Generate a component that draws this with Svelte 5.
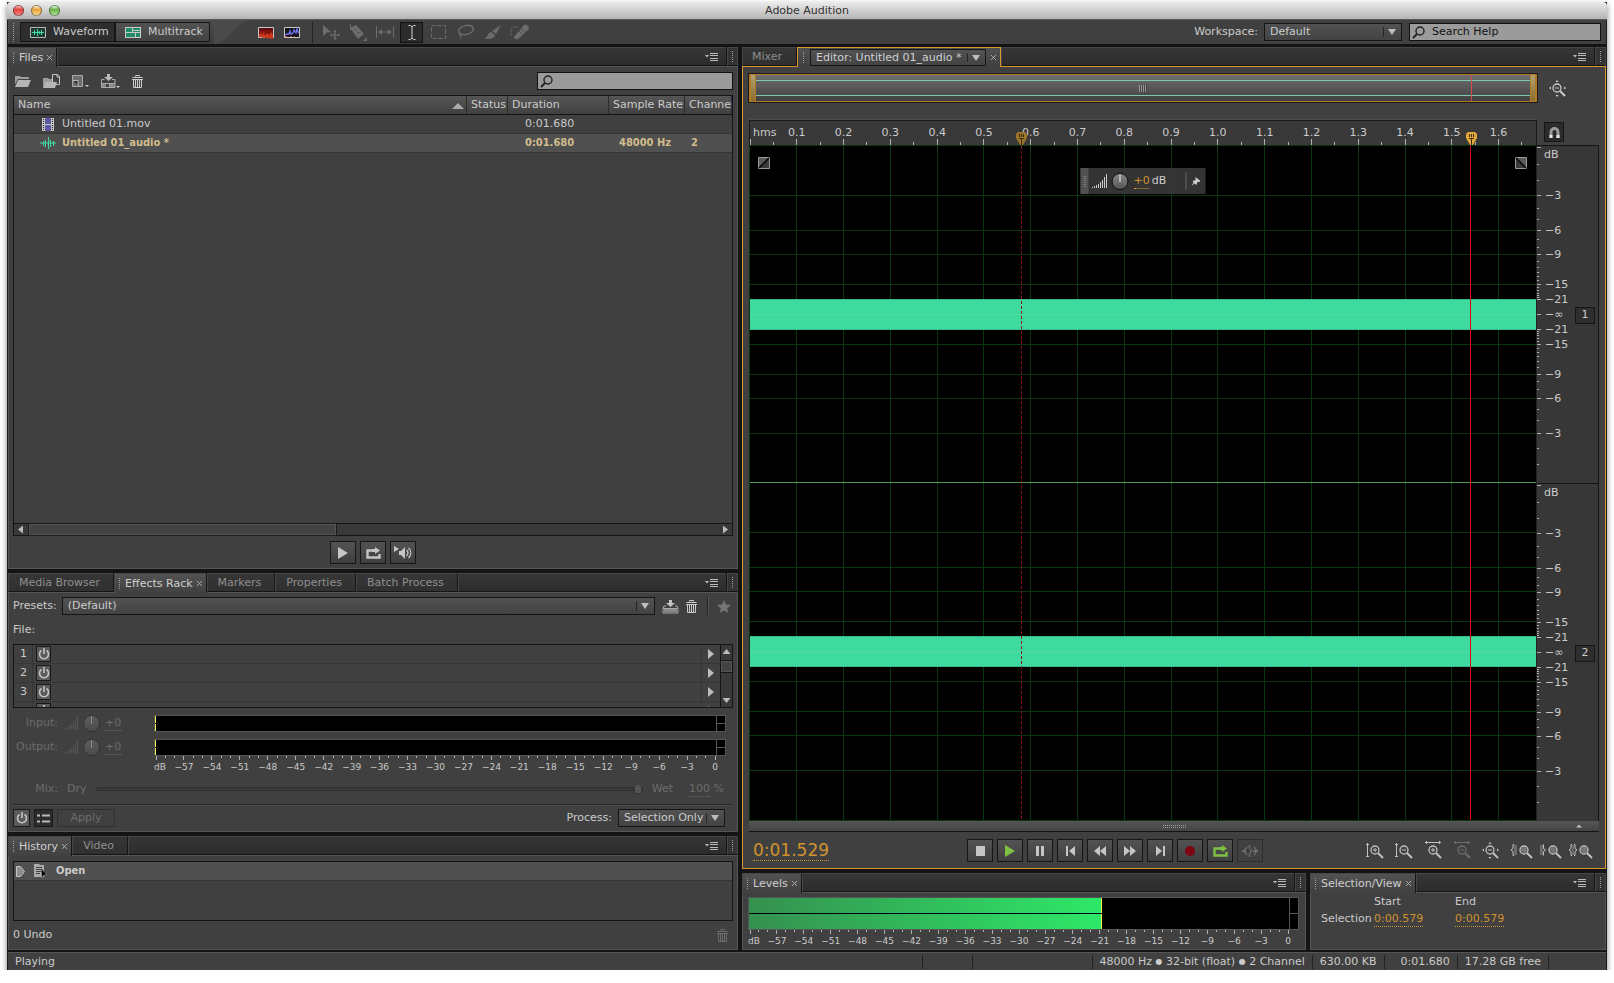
<script>
    // transport + view state
    let mode = $state('Waveform');
    let presetName = $state('(Default)');
    let mix = $state(100);
    let helpQuery = $state('Search Help');
    let fileQuery = $state('');

    const duration = 1.68;
    const playhead = 1.54;
    const marker = 0.58;
    const peak = -20.7;

    const files = [
        { name: 'Untitled 01.mov', icon: 'film', duration: '0:01.680', rate: '', channels: '' },
        { name: 'Untitled 01_audio *', icon: 'wave', duration: '0:01.680', rate: '48000 Hz', channels: '2', active: true }
    ];

    const tools = ['move', 'razor', 'timesel', 'ibeam', 'marquee', 'lasso', 'brush', 'heal'];
    const transport = ['stop', 'play', 'pause', 'toStart', 'rewind', 'forward', 'toEnd', 'record', 'loop', 'skip'];
    const zooms = ['zoomInV', 'zoomOutV', 'zoomInH', 'zoomOutH', 'zoomFull', 'zoomIn', 'zoomOut', 'zoomSel'];

    const seconds = Array.from({ length: 16 }, (_, i) => (i + 1) / 10);
    const halfSeconds = Array.from({ length: 17 }, (_, i) => i / 10 + 0.05);
    const gridDb = [-3, -6, -9, -15];
    const labelDb = [-3, -6, -9, -15, -21];
    const minorDb = Array.from({ length: 21 }, (_, i) => -(i + 1));
    const meterDb = Array.from({ length: 61 }, (_, i) => i - 60);

    const xAt = (t) => (t / duration) * 100 + '%';
    const yAt = (db, side) => 50 - side * 50 * Math.pow(10, db / 20) + '%';
    const meterAt = (db) => ((db + 60) / 60) * 100 + '%';

    const lens = (cx, inner) => `<circle cx="${cx}" cy="8" r="4" fill="#404040" stroke="currentColor" stroke-width="1.3"/>
        <path d="M${cx + 3} 11l5 5" stroke="currentColor" stroke-width="2"/>${inner}`;
    const plus = (cx) => `<path d="M${cx - 2} 8h4M${cx} 6v4" stroke="currentColor"/>`;
    const minus = (cx) => `<path d="M${cx - 2} 8h4" stroke="currentColor"/>`;
    const vArrow = `<path d="M1.500 1v14M0 2.500h3M0 14.500h3" stroke="currentColor" fill="none"/>`;
    const hArrow = `<path d="M1 .5h16M2.500 -1v3M15.500 -1v3" stroke="currentColor" fill="none"/>`;

    // name: [width, height, markup]
    const icons = {
        modeWave: [16, 11, '<path d="M.5 .5h15v10h-15z" fill="#1b3a30" stroke="#b5b5b5"/><path d="M2 5.500h12M4.500 3v5M7.500 2v7M9.500 4v3M11.500 3v5" stroke="#42dba0"/>'],
        modeMulti: [16, 11, '<path d="M0 0h16v11H0z" fill="#c9c9c9"/><path d="M1 1h6v4H1zM8 1h7v2H8zM8 4h7v1H8zM1 6h9v4H1zM11 6h4v4h-4z" fill="#238a66"/>'],
        spectral: [16, 11, '<path d="M.5 .5h15v10h-15z" fill="#7d1110" stroke="#c9c9c9"/><path d="M1 10V8l2-3 1 3 2-4 1 5 2-3 2 2 2-3 2 3v4z" fill="#c9371a"/><path d="M1 1h14v2H1z" fill="#5a0d12"/>'],
        pitch: [16, 11, '<path d="M.5 .5h15v10h-15z" fill="#15151f" stroke="#c9c9c9"/><path d="M1 8l2-1 2 0 1-3 1 3 2-1 1-3 2 3 1-4 1 3 1 1" stroke="#7279f5" fill="none" stroke-width="1.300"/><path d="M1 9.500h2M6 9.500h2M10 9.500h1" stroke="#d0402a"/>'],
        move: [18, 16, '<path d="M1 1l8 7-4 .6L1 12z" fill="currentColor"/><path d="M13 6l2 2h-1.300v2.500H16V9l2 2-2 2v-1.500h-2.300V14H15l-2 2-2-2h1.300v-2.500H10V13l-2-2 2-2v1.500h2.300V8H11z" fill="currentColor"/>'],
        razor: [18, 17, '<path d="M1 4l6-3 8 9-6 5z" fill="currentColor"/><path d="M6 5l1 1M9 8l1 1" stroke="#2c2c2c"/><path d="M1.500 0v6" stroke="currentColor"/><path d="M18 13v4h-4z" fill="currentColor"/>'],
        timesel: [18, 12, '<path d="M.5 0v12M17.500 0v12M3 6h12" stroke="currentColor"/><path d="M2 6l4-3v6zM16 6l-4-3v6z" fill="currentColor"/>'],
        ibeam: [8, 15, '<path d="M.5 .5h2L4 2l1.500-1.500h2M4 2v11M.5 14.500h2L4 13l1.500 1.500h2" stroke="currentColor" fill="none"/>'],
        marquee: [15, 14, '<path d="M.5 .5h14v13H.5z" stroke="currentColor" fill="none" stroke-dasharray="4 2"/>'],
        lasso: [17, 16, '<ellipse cx="9" cy="6" rx="7.500" ry="4.500" stroke="currentColor" fill="none" stroke-width="1.400" transform="rotate(-12 9 6)"/><path d="M3 9c-2 2 1 3 2 2s-2-2-2 0 1 3 1 4" stroke="currentColor" fill="none"/>'],
        brush: [18, 15, '<path d="M17 0l-5 9-4-3z" fill="currentColor"/><path d="M7 7l4 3c-1 4-5 4-11 4 4-1 3-6 7-7z" fill="currentColor"/>'],
        heal: [19, 17, '<path d="M4 13l9-11a3 3 0 0 1 5 4L8 15a3 3 0 0 1-4-2z" fill="currentColor"/><path d="M9 7l4 4M11 5l4 3" stroke="#404040" stroke-dasharray="1 1"/><path d="M8 3C2 1-1 6 2 12" fill="none" stroke="currentColor" stroke-dasharray="2 1"/>'],
        search: [13, 13, '<circle cx="8" cy="5" r="4" fill="none" stroke="#222" stroke-width="1.400"/><path d="M5 8l-4 4" stroke="#222" stroke-width="2"/>'],
        open: [16, 12, '<path d="M0 1h5l1 1h8v2H3L0 10z" fill="#9c9c9c"/><path d="M0 11l3-6.500h12.500" fill="none" stroke="#404040"/><path d="M3 5h13l-3 7H0z" fill="#b5b5b5"/>'],
        openFile: [17, 15, '<path d="M0 4h5l1 1h3v3H3L0 13z" fill="#9c9c9c"/><path d="M9.500 .5h5l2 2v8h-7z" fill="#404040" stroke="#c4c4c4"/><path d="M14 0v3h3" fill="none" stroke="#c4c4c4"/><path d="M2 8h12l-2 6H0z" fill="#b5b5b5"/>'],
        newFile: [17, 14, '<path d="M.5 1.500h10v11H.5z" fill="#6d6d6d" stroke="#aaa"/><path d="M1 6h5v6z" fill="#2b2b2b"/><path d="M.5 6.500h5.500V12" fill="none" stroke="#bbb"/><path d="M13 11h4l-2 2z" fill="#ccc"/>'],
        insert: [19, 15, '<path d="M6 0h3v3h3L7.500 7 3 3h3z" fill="#bbb"/><path d="M.5 5.500h3M11 5.500h3v8H.5v-8M0 9.500h14M8.500 9v4" stroke="#aaa" fill="none"/><path d="M9 10h5v3H9zM1 10h4v3H1z" fill="#888"/><path d="M15 12h4l-2 2z" fill="#ccc"/>'],
        trash: [11, 13, '<path d="M3.500 1.500v-1h4v1M.5 2.500h10M1.500 4v8.500h8V4M3.500 5v7M5.500 5v7M7.500 5v7M0 4.500h11" stroke="currentColor" fill="none"/>'],
        film: [12, 13, '<path d="M0 0h12v13H0z" fill="#c9c9c9"/><path d="M3 0h6v6H3zM3 7h6v6H3z" fill="#5a5aa0"/><path d="M1.500 1v12M10.500 1v12" stroke="#222" stroke-dasharray="1 1"/>'],
        wave: [16, 12, '<path d="M0 6h16" stroke="#42dba0"/><path d="M3.500 4v5M5.500 3v7M8.500 0v12M10.500 3v7M13.500 4v5" stroke="#42dba0"/>'],
        play: [10, 12, '<path d="M0 0l10 6-10 6z" fill="currentColor"/>'],
        loop: [15, 12, '<path d="M6 3.500H1.500v7h12V7" stroke="currentColor" stroke-width="2.400" fill="none"/><path d="M6 2h3V0l5 3.500L9 7V5H6z" fill="currentColor"/>'],
        speaker: [18, 14, '<path d="M0 0l5 3-5 3z" fill="currentColor"/><path d="M5 5h2l4-4v12l-4-4H5z" fill="currentColor"/><path d="M12.500 4c2 2 2 4 0 6M14.500 2c3 3 3 7 0 10" stroke="currentColor" fill="none" stroke-width="1.300"/>'],
        stop: [9, 10, '<path d="M0 0h9v10H0z" fill="currentColor"/>'],
        pause: [9, 10, '<path d="M0 0h3v10H0zM5 0h3v10H5z" fill="currentColor"/>'],
        toStart: [9, 10, '<path d="M0 0h2v10H0zM9 0v10L3 5z" fill="currentColor"/>'],
        toEnd: [9, 10, '<path d="M7 0h2v10H7zM0 0v10l6-5z" fill="currentColor"/>'],
        rewind: [12, 10, '<path d="M6 0v10L0 5zM12 0v10L6 5z" fill="currentColor"/>'],
        forward: [12, 10, '<path d="M0 0v10l6-5zM6 0v10l6-5z" fill="currentColor"/>'],
        record: [10, 10, '<circle cx="5" cy="5" r="5" fill="#7d0410"/>'],
        skip: [16, 12, '<path d="M0 6h4M11 6h5" stroke="currentColor" stroke-width="2"/><path d="M5 2L2 6l3 4M7.500 0v4M7.500 8v4M12 2l3 4-3 4M9 4v4" stroke="currentColor" fill="none" stroke-width="1.400"/>'],
        save: [15, 13, '<path d="M6 0h3v3h3L7.500 7 3 3h3z" fill="#c4c4c4"/><path d="M3 6H1L0 9v4h15V9l-1-3h-2M.5 8.500h14" stroke="#aaa" fill="none"/><path d="M1 9h13v3H1z" fill="#8a8a8a"/>'],
        star: [14, 13, '<path d="M7 0l2 4.500 5 .5-4 3.500L11.500 13 7 10.500 2.500 13 4 8.500 0 5l5-.5z" fill="#747474"/>'],
        power: [12, 12, '<path d="M3.500 2.500a4.500 4.500 0 1 0 5 0M6 0v6" stroke="#c4c4c4" fill="none" stroke-width="1.600"/>'],
        list: [13, 9, '<path d="M0 1.500h3M0 7.500h3M5 1.500h8M5 7.500h8" stroke="#bbb" stroke-width="2"/>'],
        state: [9, 11, '<path d="M.5 .5h4l4 5-4 5h-4z" fill="#8c8c8c" stroke="#c4c4c4"/>'],
        doc: [13, 14, '<path d="M0 0h5l1 1h4v12H0z" fill="#aaa"/><path d="M2 3.500h6M2 5.500h6M2 7.500h5M2 9.500h4" stroke="#444"/><path d="M7 4l6 7-3 0-2 3z" fill="#000" stroke="#aaa" stroke-width=".5"/>'],
        signal: [15, 14, '<path d="M.5 13v1M2.500 12v2M4.500 11v3M6.500 10v4M8.500 8v6M10.500 6v8M12.500 3v11M14.500 0v14" stroke="currentColor" shape-rendering="crispEdges"/>'],
        pin: [9, 9, '<path d="M4 0l5 4-1 1-2 0-1 3-2-1.500L0 9l2-3.500L1 4l3-1z" fill="currentColor"/>'],
        magnet: [11, 12, '<path d="M2 12V6a3.500 3.500 0 0 1 7 0v6" stroke="#999" stroke-width="3" fill="none"/><path d="M.5 9h3v3h-3zM7.500 9h3v3h-3z" fill="#e8e8e8"/>'],
        fadeIn: [12, 12, '<path d="M.5 .5h11v11H.5z" fill="#3a3a3a" stroke="#999"/><path d="M1 1h10L1 11z" fill="#5a5a5a"/><path d="M1 11L11 1" stroke="#000" stroke-width="1.300"/>'],
        fadeOut: [12, 12, '<path d="M.5 .5h11v11H.5z" fill="#3a3a3a" stroke="#999"/><path d="M1 1h10v10z" fill="#5a5a5a"/><path d="M1 1l10 10" stroke="#000" stroke-width="1.300"/>'],
        head: [11, 13, '<path d="M0 2l2-2h7l2 2v4l-4 7H4L0 6z" fill="currentColor"/><path d="M3.500 2v3M5.500 2v3M7.500 2v3M3 6.500h5M5.500 6v7" stroke="#3d2c08"/>'],
        menu: [13, 8, '<path d="M0 2h4L2 4.500z" fill="#bbb"/><path d="M5 .5h8M5 2.500h8M5 5.500h8M5 7.500h8" stroke="#bbb"/>'],
        close: [5, 5, '<path d="M0 0l5 5M5 0L0 5" stroke="#b5b5b5" stroke-width=".9"/>'],
        zoomInV: [17, 17, vArrow + lens(9, plus(9))],
        zoomOutV: [17, 17, vArrow + lens(9, minus(9))],
        zoomInH: [17, 17, hArrow + lens(9, plus(9))],
        zoomOutH: [17, 17, hArrow + lens(9, minus(9))],
        zoomFull: [17, 17, lens(8, minus(8)) + '<path d="M0 8l2-1.500v3zM17 8l-2-1.500v3zM8 0L6.500 2h3zM8 17l-1.500-2h3z" fill="currentColor"/>'],
        zoomIn: [20, 17, '<path d="M3 2.500H2v4l-2 1.500 2 1.500v4h1" stroke="currentColor" fill="none"/><path d="M3 3h3v10H3z" fill="#6a6a6a"/>' + lens(13, '<circle cx="13" cy="8" r="3" fill="#777"/>')],
        zoomOut: [20, 17, '<path d="M3.500 2.500v4l2 1.500-2 1.500v4" stroke="currentColor" fill="none"/><path d="M0 3h3v10H0z" fill="#6a6a6a"/>' + lens(13, '<circle cx="13" cy="8" r="3" fill="#777"/>')],
        zoomSel: [22, 17, '<path d="M3 2.500H2v4L0 8l2 1.500v4h1M5 2.500h1v4L8 8 6 9.500v4H5" stroke="currentColor" fill="none"/><path d="M3 3h2v10H3z" fill="#6a6a6a"/>' + lens(15, '<circle cx="15" cy="8" r="3" fill="#777"/>')]
    };
</script>

{#snippet icon(name)}
    <svg class="icon" width={icons[name][0]} height={icons[name][1]} viewBox="0 0 {icons[name][0]} {icons[name][1]}" aria-hidden="true">
        {@html icons[name][2]}
    </svg>
{/snippet}

{#snippet tabEnd()}
    <div class="tab-fill">
        <button class="bare" aria-label="Panel menu">{@render icon('menu')}</button>
    </div>
    <div class="tab-grip"><span class="grip"></span></div>
{/snippet}

{#snippet tabs(names, active)}
    <div class="tabs">
        {#each names as name}
            <div class="tab" class:active={name === active}>
                {#if name === active}<span class="grip"></span>{/if}
                <button class="bare">{name}</button>
                {#if name === active}
                    <button class="bare" aria-label="Close {name}">{@render icon('close')}</button>
                {/if}
            </div>
        {/each}
        {@render tabEnd()}
    </div>
{/snippet}

{#snippet dropdown(id, value)}
    <span class="dropdown">
        <select {id}><option>{value}</option></select>
    </span>
{/snippet}

{#snippet meter(level)}
    <div class="meter">
        <div class="bars">
            {#each [1, 2] as ch}
                <div class="bar"><div class="fill" style:width={meterAt(level)}></div></div>
            {/each}
        </div>
        <div class="clip"><i></i><i></i></div>
    </div>
{/snippet}

{#snippet meterScale()}
    <svg class="meter-scale" height="19">
        {#each meterDb as db}
            <line x1={meterAt(db)} x2={meterAt(db)} y1="0" y2={db % 3 === 0 ? 4 : 2} />
            {#if db > -60 && db % 3 === 0}
                <text x={meterAt(db)} y="14">{db === 0 ? '0' : '−' + -db}</text>
            {/if}
        {/each}
        <text class="unit" x="-2" y="14">dB</text>
    </svg>
{/snippet}

<div class="window">
    <header class="titlebar">
        <div class="lights">
            <i class="red"></i><i class="amber"></i><i class="green"></i>
        </div>
        Adobe Audition
    </header>

    <div class="toolbar">
        <div class="modes">
            <span class="grip tall"></span>
            <div class="mode-buttons">
                <button class:on={mode === 'Waveform'} onclick={() => (mode = 'Waveform')}>{@render icon('modeWave')}Waveform</button>
                <button class:on={mode === 'Multitrack'} onclick={() => (mode = 'Multitrack')}>{@render icon('modeMulti')}Multitrack</button>
            </div>
        </div>
        <svg class="curve" width="36" height="24" viewBox="0 0 36 24" aria-hidden="true">
            <path d="M0 0h36C22 1 16 23 0 24z" fill="#4a4a4a" />
        </svg>
        <div class="displays">
            <button class="bare" aria-label="Spectral frequency">{@render icon('spectral')}</button>
            <button class="bare" aria-label="Spectral pitch">{@render icon('pitch')}</button>
        </div>
        <div class="tools">
            {#each tools as tool}
                <button class="tool" class:on={tool === 'ibeam'} aria-label={tool}>{@render icon(tool)}</button>
            {/each}
        </div>
        <label for="workspace">Workspace:</label>
        <div class="workspace-select">{@render dropdown('workspace', 'Default')}</div>
        <div class="search help">
            {@render icon('search')}
            <input type="text" aria-label="Search Help" bind:value={helpQuery} />
        </div>
    </div>

    <main>
        <div class="column">
            <section class="panel files">
                {@render tabs(['Files'], 'Files')}
                <div class="body">
                    <div class="files-bar">
                        {#each ['open', 'openFile', 'newFile', 'insert', 'trash'] as name}
                            <button class="bare" aria-label={name}>{@render icon(name)}</button>
                        {/each}
                        <div class="search">
                            {@render icon('search')}
                            <input type="text" aria-label="Filter files" bind:value={fileQuery} />
                        </div>
                    </div>
                    <div class="list">
                        <div class="table-wrap">
                            <table>
                                <colgroup>
                                    <col /><col class="c-status" /><col class="c-duration" /><col class="c-rate" /><col class="c-channels" />
                                </colgroup>
                                <thead>
                                    <tr><th class="sorted">Name</th><th>Status</th><th>Duration</th><th>Sample Rate</th><th>Channels</th></tr>
                                </thead>
                                <tbody>
                                    {#each files as file}
                                        <tr class:current={file.active}>
                                            <td><span class="file">{@render icon(file.icon)}{file.name}</span></td>
                                            <td></td>
                                            <td class="pad">{file.duration}</td>
                                            <td class="rate">{file.rate}</td>
                                            <td>{file.channels}</td>
                                        </tr>
                                    {/each}
                                </tbody>
                            </table>
                        </div>
                        <div class="hscroll">
                            <button class="bare" aria-label="Scroll left"><i class="tri left"></i></button>
                            <span class="thumb"></span>
                            <button class="bare end" aria-label="Scroll right"><i class="tri right"></i></button>
                        </div>
                    </div>
                    <div class="preview">
                        {#each ['play', 'loop', 'speaker'] as name}
                            <button class="btn" aria-label={name}>{@render icon(name)}</button>
                        {/each}
                    </div>
                </div>
            </section>

            <section class="panel">
                {@render tabs(['Media Browser', 'Effects Rack', 'Markers', 'Properties', 'Batch Process'], 'Effects Rack')}
                <div class="body">
                    <div class="presets">
                        <label for="preset">Presets:</label>
                        {@render dropdown('preset', presetName)}
                        <button class="bare" aria-label="Save preset">{@render icon('save')}</button>
                        <button class="bare" aria-label="Delete preset">{@render icon('trash')}</button>
                        <span class="sep"></span>
                        <button class="bare" aria-label="Favorite">{@render icon('star')}</button>
                    </div>
                    <div class="file-label">File:</div>
                    <div class="rack">
                        <div class="slots">
                            {#each [1, 2, 3, 4] as n}
                                <div class="slot">
                                    <span class="num">{n < 4 ? n : ''}</span>
                                    <button class="power" aria-label="Power {n}">{@render icon('power')}</button>
                                    <button class="bare more" aria-label="Insert effect {n}"><i class="tri right big"></i></button>
                                </div>
                            {/each}
                        </div>
                        <div class="vscroll">
                            <button class="bare" aria-label="Scroll up"><i class="tri up"></i></button>
                            <span class="thumb"></span>
                            <button class="bare end" aria-label="Scroll down"><i class="tri down"></i></button>
                        </div>
                    </div>
                    <div class="gains">
                        <div class="gain-labels">
                            {#each ['Input:', 'Output:'] as label}
                                <div class="gain">
                                    <span class="gain-name">{label}</span>
                                    {@render icon('signal')}
                                    <span class="knob"></span>
                                    <button class="hot" disabled>+0</button>
                                </div>
                            {/each}
                        </div>
                        <div class="gain-meters">
                            {@render meter(-60)}
                            {@render meter(-60)}
                            {@render meterScale()}
                        </div>
                    </div>
                    <div class="mix">
                        <label class="gain-name" for="mix">Mix:</label>
                        <span>Dry</span>
                        <input id="mix" type="range" min="0" max="100" bind:value={mix} disabled />
                        <span>Wet</span>
                        <span class="mix-value"><button class="hot" disabled>{mix}</button> %</span>
                    </div>
                    <div class="rack-foot">
                        <button class="power large" aria-label="Rack power">{@render icon('power')}</button>
                        <button class="power large dark" aria-label="Toggle list">{@render icon('list')}</button>
                        <button class="apply" disabled>Apply</button>
                        <label for="process">Process:</label>
                        {@render dropdown('process', 'Selection Only')}
                    </div>
                </div>
            </section>

            <section class="panel">
                {@render tabs(['History', 'Video'], 'History')}
                <div class="body history-body">
                    <div class="history">
                        <div class="entry">{@render icon('state')}{@render icon('doc')}<b>Open</b></div>
                    </div>
                    <div class="undo">
                        0 Undo
                        <button class="bare" aria-label="Clear history">{@render icon('trash')}</button>
                    </div>
                </div>
            </section>
        </div>

        <div class="column">
            <section class="panel editor">
                <div class="tabs">
                    <div class="tab"><button class="bare">Mixer</button></div>
                    <div class="tab active focused">
                        <span class="grip"></span>
                        <span class="dropdown">
                            <select aria-label="Editor file"><option>Editor: Untitled 01_audio *</option></select>
                        </span>
                        <button class="bare" aria-label="Close editor">{@render icon('close')}</button>
                    </div>
                    {@render tabEnd()}
                </div>
                <div class="body">
                    <div class="row">
                        <div class="overview">
                            <span class="handle"></span>
                            <span class="ridge"></span>
                            <span class="handle"></span>
                            <span class="overview-head" style:left={xAt(playhead)}></span>
                        </div>
                        <div class="side zoom-all">
                            <button class="bare" aria-label="Zoom out full">{@render icon('zoomFull')}</button>
                        </div>
                    </div>

                    <div class="row ruler-row">
                        <div class="ruler">
                            <svg>
                                <text x="3" y="15">hms</text>
                                <line x1="0" x2="0" y1="18" y2="25" />
                                {#each seconds as t}
                                    <text class="mid" x={xAt(t)} y="15">{t.toFixed(1)}</text>
                                    <line x1={xAt(t)} x2={xAt(t)} y1="18" y2="25" />
                                {/each}
                                {#each halfSeconds as t}
                                    <line x1={xAt(t)} x2={xAt(t)} y1="21" y2="25" />
                                {/each}
                            </svg>
                            <span class="head dim" style:left={xAt(marker)}>{@render icon('head')}</span>
                            <span class="head" style:left={xAt(playhead)}>{@render icon('head')}</span>
                        </div>
                        <div class="side">
                            <button class="magnet" aria-label="Toggle snapping">{@render icon('magnet')}</button>
                        </div>
                    </div>

                    <div class="row waves-row">
                        <div class="waves">
                            {#each [1, 2] as ch}
                                <svg class="channel">
                                    {#each seconds as t}
                                        <line class="grid" x1={xAt(t)} x2={xAt(t)} y1="0" y2="100%" />
                                    {/each}
                                    {#each [1, -1] as side}
                                        {#each gridDb as db}
                                            <line class="grid" x1="0" x2="100%" y1={yAt(db, side)} y2={yAt(db, side)} />
                                        {/each}
                                    {/each}
                                    <rect x="0" y={yAt(-20.8, 1)} width="100%" height={100 * Math.pow(10, -20.8 / 20) + '%'} fill="#3fdaa0" />
                                    <line class="zero" x1="0" x2="100%" y1="50%" y2="50%" />
                                </svg>
                            {/each}
                            <svg class="cursors">
                                <line class="start" x1={xAt(marker)} x2={xAt(marker)} y1="0" y2="100%" />
                                <line class="now" x1={xAt(playhead)} x2={xAt(playhead)} y1="0" y2="100%" />
                            </svg>
                            <span class="fade in">{@render icon('fadeIn')}</span>
                            <span class="fade out">{@render icon('fadeOut')}</span>
                            <div class="hud">
                                <span class="hud-grip"><span class="grip"></span></span>
                                {@render icon('signal')}
                                <span class="knob lit"></span>
                                <button class="hot">+0</button>
                                <span>dB</span>
                                <span class="sep"></span>
                                <button class="bare" aria-label="Pin">{@render icon('pin')}</button>
                            </div>
                        </div>
                        <div class="side scales">
                            {#each [1, 2] as ch}
                                <div class="scale">
                                    <svg>
                                        <text x="7" y="8">dB</text>
                                        <line x1="0" x2="4" y1="1" y2="1" />
                                        {#each [1, -1] as side}
                                            {#each minorDb as db}
                                                <line x1="0" x2={labelDb.includes(db) ? 4 : 2} y1={yAt(db, side)} y2={yAt(db, side)} />
                                            {/each}
                                            {#each labelDb as db}
                                                <text x="8" y={yAt(db, side)}>−{-db}</text>
                                            {/each}
                                        {/each}
                                        <line x1="0" x2="4" y1="50%" y2="50%" />
                                        <text x="8" y="50%">−∞</text>
                                    </svg>
                                    <button class="ch" aria-label="Channel {ch}">{ch}</button>
                                </div>
                            {/each}
                        </div>
                    </div>

                    <div class="resize"><span class="grip wide"></span><i class="tri up small"></i></div>

                    <div class="transport">
                        <button class="hot time">0:01.529</button>
                        <div class="keys">
                            {#each transport as key}
                                <button class="btn {key}" disabled={key === 'skip'} aria-label={key}>{@render icon(key)}</button>
                            {/each}
                        </div>
                        <div class="zooms">
                            {#each zooms as key}
                                <button class="bare" disabled={key === 'zoomOutH'} aria-label={key}>{@render icon(key)}</button>
                            {/each}
                        </div>
                    </div>
                </div>
            </section>

            <div class="bottom">
                <section class="panel">
                    {@render tabs(['Levels'], 'Levels')}
                    <div class="body levels">
                        {@render meter(peak)}
                        {@render meterScale()}
                    </div>
                </section>
                <section class="panel">
                    {@render tabs(['Selection/View'], 'Selection/View')}
                    <div class="body selection">
                        <span></span><span>Start</span><span>End</span>
                        <span>Selection</span>
                        <button class="hot">0:00.579</button>
                        <button class="hot">0:00.579</button>
                    </div>
                </section>
            </div>
        </div>
    </main>

    <footer>
        <span class="status">Playing</span>
        <span class="cell empty"></span>
        <span class="cell gap"></span>
        <span class="cell">48000 Hz <small>●</small> 32-bit (float) <small>●</small> 2 Channel</span>
        <span class="cell">630.00 KB</span>
        <span class="cell length">0:01.680</span>
        <span class="cell">17.28 GB free</span>
        <span class="cell tail"></span>
    </footer>
</div>

<style>
    :global(body) {
        margin: 0;
        background: #fff;
    }

    .window {
        position: relative;
        top: 2px;
        display: flex;
        flex-direction: column;
        box-sizing: border-box;
        min-height: calc(100vh - 13px);
        margin: 0 7px;
        border: 1px solid #1a1a1a;
        border-top: 0;
        background: #141414;
        box-shadow: 0 3px 6px rgba(0, 0, 0, 0.5);
        color: #cbcbcb;
        font: 11px/16px 'DejaVu Sans', 'Noto Sans', sans-serif;
    }

    button, input, select {
        box-sizing: border-box;
        margin: 0;
        font: inherit;
        color: inherit;
    }

    .bare {
        display: flex;
        align-items: center;
        padding: 0;
        border: 0;
        background: none;
        white-space: nowrap;
    }

    .icon {
        display: block;
        flex: none;
        overflow: visible;
    }

    .grip {
        flex: none;
        width: 3px;
        height: 11px;
        background: repeating-conic-gradient(#a0a0a0 0 25%, transparent 0 100%) 0 0 / 2px 2px;
    }

    .grip.tall { height: 19px; }
    .grip.wide { width: 25px; height: 3px; }

    .sep {
        width: 1px;
        height: 18px;
        background: #222;
        border-right: 1px solid #555;
    }

    .tri { display: block; background: #bdbdbd; }
    .tri.left { width: 5px; height: 8px; clip-path: polygon(100% 0, 100% 100%, 0 50%); }
    .tri.right { width: 5px; height: 8px; clip-path: polygon(0 0, 0 100%, 100% 50%); }
    .tri.big { width: 6px; height: 10px; }
    .tri.up { width: 8px; height: 5px; clip-path: polygon(0 100%, 100% 100%, 50% 0); }
    .tri.down { width: 8px; height: 5px; clip-path: polygon(0 0, 100% 0, 50% 100%); }
    .tri.small { width: 6px; height: 3px; }

    /* title bar and toolbar */
    .titlebar {
        display: flex;
        align-items: center;
        justify-content: center;
        position: relative;
        height: 17px;
        margin: 0 -1px;
        border-radius: 4px 4px 0 0;
        background: linear-gradient(#ececec, #b4b4b4);
        color: #333;
        border-bottom: 1px solid #5a5a5a;
    }

    .lights {
        position: absolute;
        left: 6px;
        display: flex;
        gap: 7px;
    }

    .lights i {
        box-sizing: border-box;
        width: 11px;
        height: 11px;
        border: 1px solid rgba(0, 0, 0, 0.4);
        border-radius: 50%;
    }

    .red { background: linear-gradient(#fbb, #e0443e 40%, #f98080); }
    .amber { background: linear-gradient(#fed, #e8a33a 40%, #fbd98a); }
    .green { background: linear-gradient(#dfd, #6cb04a 40%, #b4e69a); }

    .toolbar {
        display: flex;
        align-items: center;
        height: 24px;
        background: #404040;
        border-left: 1px solid #4e4e4e;
    }

    .modes {
        display: flex;
        align-items: center;
        gap: 5px;
        height: 100%;
        padding: 0 4px 0 3px;
        background: linear-gradient(#4c4c4c, #3c3c3c);
    }

    .mode-buttons { display: flex; }

    .mode-buttons button {
        display: flex;
        align-items: center;
        gap: 7px;
        width: 95px;
        height: 20px;
        padding: 0 0 0 9px;
        border: 1px solid #161616;
        background: linear-gradient(#525252, #424242);
    }

    .mode-buttons button.on { background: #2e2e2e; }

    .curve { align-self: flex-start; }

    .displays {
        display: flex;
        gap: 10px;
        margin: 0 6px 0 8px;
        padding-right: 12px;
        border-right: 1px solid #222;
        height: 21px;
    }

    .tools {
        display: flex;
        flex: 1;
        gap: 4px;
        color: #6c6c6c;
    }

    .tool {
        display: flex;
        align-items: center;
        justify-content: center;
        width: 23px;
        height: 21px;
        padding: 0;
        border: 1px solid transparent;
        background: none;
    }

    .tool.on {
        border-color: #111;
        background: #2c2c2c;
        color: #d0d0d0;
    }

    .workspace-select {
        display: flex;
        width: 138px;
        margin: 0 7px 0 6px;
    }

    .dropdown {
        position: relative;
        display: inline-flex;
        flex: 1;
        height: 18px;
        border: 1px solid #151515;
        box-sizing: border-box;
        background: linear-gradient(#525252, #434343);
    }

    .dropdown::before {
        content: '';
        position: absolute;
        right: 17px;
        top: 3px;
        bottom: 3px;
        width: 1px;
        background: #262626;
    }

    .dropdown::after {
        content: '';
        position: absolute;
        right: 5px;
        top: 5px;
        width: 8px;
        height: 6px;
        background: #bdbdbd;
        clip-path: polygon(0 0, 100% 0, 50% 100%);
    }

    .dropdown select {
        flex: 1;
        min-width: 0;
        appearance: none;
        padding: 0 18px 0 5px;
        border: 0;
        background: none;
        outline: none;
    }

    .search {
        display: flex;
        align-items: center;
        gap: 7px;
        box-sizing: border-box;
        height: 18px;
        padding: 0 3px 0 2px;
        border: 1px solid #111;
        background: #9b9b9b;
    }

    .search input {
        flex: 1;
        min-width: 0;
        padding: 0;
        border: 0;
        background: none;
        outline: none;
        color: #111;
    }

    .help { width: 192px; margin-right: 5px; }

    /* panels */
    main {
        display: grid;
        grid-template-columns: minmax(0, 730fr) minmax(0, 864fr);
        gap: 4px;
        flex: 1;
        margin-top: 3px;
    }

    .column {
        display: flex;
        flex-direction: column;
        gap: 4px;
        min-height: 0;
    }

    .panel { display: flex; flex-direction: column; }
    .files, .editor { flex: 1; }

    .body {
        flex: 1;
        display: flex;
        flex-direction: column;
        padding: 4px;
        border: 1px solid #555;
        background: #404040;
    }

    .files .body { padding-top: 5px; }

    .tabs {
        display: flex;
        height: 19px;
    }

    .tab {
        display: flex;
        align-items: center;
        box-sizing: border-box;
        padding: 0 13px 0 10px;
        border-right: 1px solid #151515;
        border-left: 1px solid #464646;
        border-top: 1px solid #464646;
        border-bottom: 1px solid #151515;
        background: linear-gradient(#363636, #303030);
        color: #8e8e8e;
    }

    .tab.active {
        position: relative;
        gap: 4px;
        height: 20px;
        padding: 0 4px 0 3px;
        border-bottom: 0;
        background: linear-gradient(#525252, #404040);
        color: #cfcfcf;
    }

    .tab-fill {
        display: flex;
        flex: 1;
        align-items: center;
        justify-content: flex-end;
        padding-right: 8px;
        border-top: 1px solid #464646;
        border-left: 1px solid #464646;
        border-bottom: 1px solid #151515;
        background: linear-gradient(#363636, #2c2c2c);
    }

    .tab-grip {
        display: flex;
        align-items: center;
        justify-content: center;
        width: 9px;
        border: 1px solid #464646;
        border-bottom-color: #151515;
        margin-left: 1px;
        background: #333;
    }

    .files-bar {
        display: flex;
        align-items: center;
        gap: 12px;
        height: 18px;
        padding-left: 2px;
    }

    .files-bar .search { width: 196px; margin-left: auto; }

    .list {
        display: flex;
        flex: 1;
        flex-direction: column;
        margin: 5px 0;
        border: 1px solid #141414;
    }

    .table-wrap { flex: 1; overflow: hidden; }

    table {
        width: 100%;
        table-layout: fixed;
        border-collapse: separate;
        border-spacing: 0;
    }

    .c-status { width: 41px; }
    .c-duration { width: 101px; }
    .c-rate { width: 76px; }
    .c-channels { width: 47px; }

    th {
        box-sizing: border-box;
        height: 19px;
        padding: 0 4px;
        background: linear-gradient(#565656, #404040);
        border-bottom: 1px solid #141414;
        box-shadow: inset -1px 0 #2c2c2c;
        font-weight: normal;
        text-align: left;
        white-space: nowrap;
    }

    .sorted { position: relative; }

    .sorted::after {
        content: '';
        position: absolute;
        right: 3px;
        top: 7px;
        width: 12px;
        height: 6px;
        background: #aaa;
        clip-path: polygon(50% 0, 100% 100%, 0 100%);
    }

    td {
        box-sizing: border-box;
        height: 19px;
        padding: 0 6px;
        border-bottom: 1px solid #353535;
        white-space: nowrap;
    }

    .pad { padding-left: 17px; }
    .rate { text-align: right; padding-right: 14px; }

    /* plain DejaVu bold runs too wide for the list columns */
    .current, b {
        font-family: 'DejaVu Sans Condensed', 'Noto Sans', sans-serif;
        font-weight: bold;
    }

    .current {
        background: #505050;
        color: #d2bd8d;
    }

    .file {
        display: grid;
        grid-template-columns: 16px auto;
        justify-content: start;
        justify-items: center;
        align-items: center;
        gap: 6px;
        padding-left: 20px;
    }

    .hscroll {
        display: flex;
        align-items: center;
        height: 11px;
        border-top: 1px solid #141414;
        background: #393939;
        padding: 0 4px;
    }

    .hscroll .thumb {
        width: 43%;
        height: 9px;
        margin-left: 6px;
        border: 1px solid #555;
        outline: 1px solid #1c1c1c;
        background: #434343;
    }

    .hscroll .end { margin-left: auto; }

    .preview {
        display: flex;
        justify-content: center;
        gap: 4px;
    }

    .btn {
        display: flex;
        align-items: center;
        justify-content: center;
        width: 26px;
        height: 23px;
        padding: 0;
        border: 1px solid #161616;
        background: linear-gradient(#535353, #3f3f3f);
        color: #c6c6c6;
    }

    /* effects rack */
    .presets {
        display: flex;
        align-items: center;
        height: 18px;
        gap: 8px;
        padding-right: 2px;
    }

    .presets label { margin-right: -3px; }
    .presets .sep { margin-left: 2px; }

    .file-label { height: 29px; line-height: 29px; }

    .rack {
        display: flex;
        height: 62px;
        border: 1px solid #141414;
    }

    .slots { flex: 1; overflow: hidden; }

    .slot {
        display: flex;
        align-items: center;
        height: 18px;
        border-bottom: 1px solid #363636;
    }

    .num {
        box-sizing: border-box;
        width: 19px;
        padding-right: 5px;
        border-right: 1px solid #363636;
        text-align: right;
        height: 18px;
        line-height: 18px;
    }

    .power {
        display: flex;
        align-items: center;
        justify-content: center;
        width: 15px;
        height: 16px;
        margin-left: 3px;
        padding: 0;
        border: 1px solid #191919;
        background: #5a5a5a;
    }

    .more {
        height: 18px;
        margin-left: auto;
        padding: 0 6px;
        border-left: 1px solid #363636;
    }

    .vscroll {
        display: flex;
        flex-direction: column;
        align-items: center;
        width: 11px;
        padding: 4px 0;
        border-left: 1px solid #141414;
        background: #393939;
    }

    .vscroll .thumb {
        width: 9px;
        height: 9px;
        margin-top: 7px;
        border: 1px solid #555;
        outline: 1px solid #141414;
        background: #434343;
    }

    .vscroll .end { margin-top: auto; }

    .gains { display: flex; color: #6c6c6c; }
    .gain-labels { width: 141px; padding-top: 3px; }

    .gain {
        display: flex;
        align-items: center;
        height: 24px;
        gap: 5px;
    }

    .gain .icon { color: #555; }
    .gain-name { width: 45px; text-align: right; color: #6c6c6c; }

    .knob {
        flex: none;
        width: 15px;
        height: 15px;
        border: 1px solid #333;
        border-radius: 50%;
        background:
            linear-gradient(#8a8a8a, #8a8a8a) 50% 0 / 1px 8px no-repeat,
            linear-gradient(#5c5c5c, #4c4c4c);
    }

    .knob.lit {
        border-color: #111;
        background:
            linear-gradient(#eee, #eee) 50% 0 / 1px 8px no-repeat,
            linear-gradient(#888, #555);
    }

    .hot {
        padding: 0;
        border: 0;
        border-bottom: 1px dotted currentColor;
        background: none;
        color: #d0922f;
        line-height: 14px;
    }

    .hot:disabled { color: #6c6c6c; }

    .gain-meters {
        flex: 1;
        padding: 7px 7px 0 0;
        color: #cbcbcb;
    }

    .gain-meters .meter { margin-bottom: 7px; }
    .gain-meters .meter + .meter { margin-bottom: 0; }

    .meter {
        display: flex;
        box-sizing: border-box;
        height: 17px;
        border: 1px solid #555;
        background: #000;
    }

    .levels .meter { height: 33px; }

    .bars {
        display: grid;
        flex: 1;
        gap: 1px;
    }

    .fill {
        height: 100%;
        border-right: 1px solid #f5f04a;
        background: linear-gradient(90deg, #35904f, #2ee868);
    }

    .clip {
        display: grid;
        width: 8px;
        margin-left: 2px;
        gap: 1px;
        border-left: 1px solid #555;
        background: #555;
    }

    .clip i { background: #000; }

    .meter-scale {
        display: block;
        width: calc(100% - 13px);
        margin-left: 2px;
        overflow: visible;
    }

    svg line { stroke: #b0b0b0; shape-rendering: crispEdges; }

    svg text { fill: #cbcbcb; }

    .meter-scale text { font-size: 9px; text-anchor: middle; }
    .meter-scale .unit { text-anchor: start; }

    .mix {
        display: flex;
        align-items: center;
        height: 18px;
        margin-top: 5px;
        gap: 9px;
        padding-right: 9px;
        color: #6c6c6c;
    }

    .mix input {
        appearance: none;
        flex: 1;
        height: 4px;
        background: #3a3a3a;
        border: 1px solid #303030;
    }

    .mix input::-webkit-slider-thumb {
        appearance: none;
        width: 8px;
        height: 10px;
        background: #555;
        border: 1px solid #333;
        clip-path: polygon(50% 0, 100% 40%, 100% 100%, 0 100%, 0 40%);
    }

    .mix-value { margin-left: 7px; }

    .rack-foot {
        display: flex;
        align-items: center;
        margin-top: 6px;
        padding: 4px 8px 0 0;
        border-top: 1px solid #262626;
        box-shadow: inset 0 1px #4c4c4c;
    }

    .power.large { width: 17px; height: 18px; margin: 0 4px 0 0; }
    .power.large.dark { width: 19px; background: #2c2c2c; }

    .apply {
        width: 58px;
        height: 18px;
        padding: 0;
        border: 1px solid #303030;
        background: #404040;
        color: #6c6c6c;
    }

    .rack-foot label { margin: 0 6px 0 auto; }
    .rack-foot .dropdown { flex: 0 0 107px; }

    /* history */
    .history-body { padding: 5px 4px 0; }

    .history {
        height: 58px;
        border: 1px solid #141414;
    }

    .entry {
        display: flex;
        align-items: center;
        gap: 9px;
        height: 18px;
        padding-left: 2px;
        border-bottom: 1px solid #353535;
        background: #505050;
    }

    .undo {
        display: flex;
        align-items: center;
        justify-content: space-between;
        height: 28px;
        padding-right: 5px;
    }

    .undo .bare { color: #6c6c6c; }

    /* editor */
    .editor .body {
        padding: 7px 0 6px;
        border-color: #d8962f;
    }

    .editor .tab { padding: 0 14px 0 9px; }

    .editor .focused {
        z-index: 1;
        gap: 5px;
        padding: 0 4px;
        border-color: #d8962f;
        border-style: solid;
        border-width: 1px 1px 0;
    }

    .focused .dropdown { width: 176px; height: 17px; }
    .focused .dropdown select { line-height: 14px; }

    .row {
        display: grid;
        grid-template-columns: minmax(0, 1fr) 62px;
        padding: 0 6px;
    }

    .side { position: relative; }

    .overview {
        position: relative;
        display: flex;
        align-items: center;
        justify-content: space-between;
        height: 26px;
        border: 1px solid #b07a26;
        background:
            linear-gradient(#7cc9b0, #7cc9b0) 0 5px / 100% 1px no-repeat,
            linear-gradient(#7cc9b0, #7cc9b0) 0 20px / 100% 1px no-repeat,
            linear-gradient(#6e6e6e, #404040);
        box-shadow: 0 0 0 1px #1a1a1a;
    }

    .handle {
        box-sizing: border-box;
        width: 6px;
        height: 26px;
        border: solid #b07a26;
        border-width: 0 1px;
        background: linear-gradient(#b3a175, #8a6c2c);
    }

    .ridge {
        width: 8px;
        height: 7px;
        background: repeating-linear-gradient(90deg, #999 0 1px, #444 1px 2px);
    }

    .overview-head {
        position: absolute;
        top: 0;
        bottom: 0;
        width: 1px;
        background: #d04a50;
    }

    .zoom-all {
        display: flex;
        align-items: center;
        padding-left: 12px;
    }

    .ruler-row { margin-top: 18px; }

    .ruler {
        position: relative;
        height: 24px;
        border: 1px solid #1a1a1a;
        border-bottom: 0;
        background: #383838;
        box-shadow: 0 -1px #4e4e4e;
    }

    .ruler svg, .scale svg, .channel, .cursors {
        display: block;
        width: 100%;
        height: 100%;
    }

    .ruler svg, .scale svg { overflow: visible; }

    .mid { text-anchor: middle; }

    .head {
        position: absolute;
        bottom: 0;
        width: 11px;
        margin-left: -5px;
        color: #e2a63a;
    }

    .ruler .head svg { width: 11px; height: 13px; }
    .head.dim { color: #9a7428; }

    .magnet {
        display: flex;
        align-items: center;
        justify-content: center;
        width: 20px;
        height: 20px;
        margin: 2px 0 0 7px;
        padding: 0;
        border: 1px solid #151515;
        background: #2b2b2b;
    }

    .waves-row { flex: 1; }

    .waves {
        position: relative;
        display: grid;
        grid-template-rows: 1fr 1fr;
        border: 1px solid #06370f;
        border-right-color: #222;
        background: #000;
    }

    .channel { min-height: 0; }
    .channel + .channel { box-shadow: 0 -1px #4e9a5a; }
    .channel .grid { stroke: #06370f; }
    .channel .zero { stroke: #52dc9c; }

    .cursors { position: absolute; top: 0; left: 0; }
    .cursors .start { stroke: #8c0f14; stroke-dasharray: 3 2; }
    .cursors .now { stroke: #d8000f; }

    .fade { position: absolute; top: 11px; }
    .fade.in { left: 8px; }
    .fade.out { right: 9px; }

    .hud {
        position: absolute;
        top: 22px;
        left: 50%;
        transform: translateX(-50%);
        display: flex;
        align-items: center;
        gap: 5px;
        box-sizing: border-box;
        width: 125px;
        height: 26px;
        padding-right: 5px;
        background: rgba(56, 56, 56, 0.92);
    }

    .hud-grip {
        display: flex;
        align-items: center;
        justify-content: center;
        width: 8px;
        height: 26px;
        margin-right: -2px;
        background: #505050;
    }

    .hud .sep { margin-left: auto; border: 0; background: #666; }
    .hud .hot + span { margin-left: -3px; }

    .scales {
        display: grid;
        grid-template-rows: 1fr 1fr;
        background: #373737;
        border-right: 1px solid #151515;
    }

    .scale {
        position: relative;
        min-height: 0;
        border-top: 1px solid #151515;
    }

    .scale text { dominant-baseline: central; }
    .scale svg { position: absolute; }

    .ch {
        position: absolute;
        top: calc(50% - 8px);
        right: 3px;
        width: 20px;
        height: 17px;
        padding: 0;
        border: 1px solid #151515;
        background: #2e2e2e;
        line-height: 14px;
    }

    .resize {
        display: grid;
        grid-template-columns: 1fr auto 1fr;
        align-items: center;
        height: 10px;
        margin: 0 6px;
        background: linear-gradient(#555, #444);
        border-bottom: 1px solid #151515;
    }

    .resize .grip { grid-column: 2; }
    .resize .tri { justify-self: end; margin-right: 17px; }

    .transport {
        display: grid;
        grid-template-columns: 214px auto 1fr;
        align-items: center;
        margin-top: 7px;
        padding: 0 14px 0 10px;
    }

    .time {
        justify-self: start;
        font-size: 17px;
        line-height: 20px;
    }

    .keys { display: flex; gap: 4px; }
    .keys .play, .keys .loop { color: #7cc142; }
    .keys .skip { background: #404040; border-color: #2c2c2c; color: #6c6c6c; }

    .zooms {
        display: flex;
        justify-content: flex-end;
        gap: 12px;
        color: #c0c0c0;
    }

    .zooms .bare:disabled { color: #6c6c6c; }
    .zooms .bare:nth-child(n + 7) { margin-left: -3px; }

    .bottom {
        display: grid;
        grid-template-columns: minmax(0, 564fr) minmax(0, 296fr);
        gap: 4px;
        height: 77px;
    }

    .levels { padding: 4px 6px 0 5px; }

    .selection {
        display: grid;
        grid-template-columns: 53px 81px 1fr;
        grid-auto-rows: 16px;
        align-content: start;
        justify-items: start;
        row-gap: 1px;
        padding: 1px 10px 0;
    }

    footer {
        display: flex;
        align-items: center;
        height: 18px;
        margin-top: 2px;
        padding: 0 1px;
        border-top: 1px solid #555;
        background: #404040;
    }

    .status { flex: 1; padding-left: 6px; }

    .cell {
        height: 14px;
        line-height: 14px;
        padding: 0 7px;
        border-left: 1px solid #222;
        white-space: nowrap;
    }

    .cell small { font-size: 8px; vertical-align: 1px; }

    .empty { width: 35px; }
    .gap { width: 105px; }
    .length { padding-left: 16px; }
    .tail { width: 42px; }
</style>
